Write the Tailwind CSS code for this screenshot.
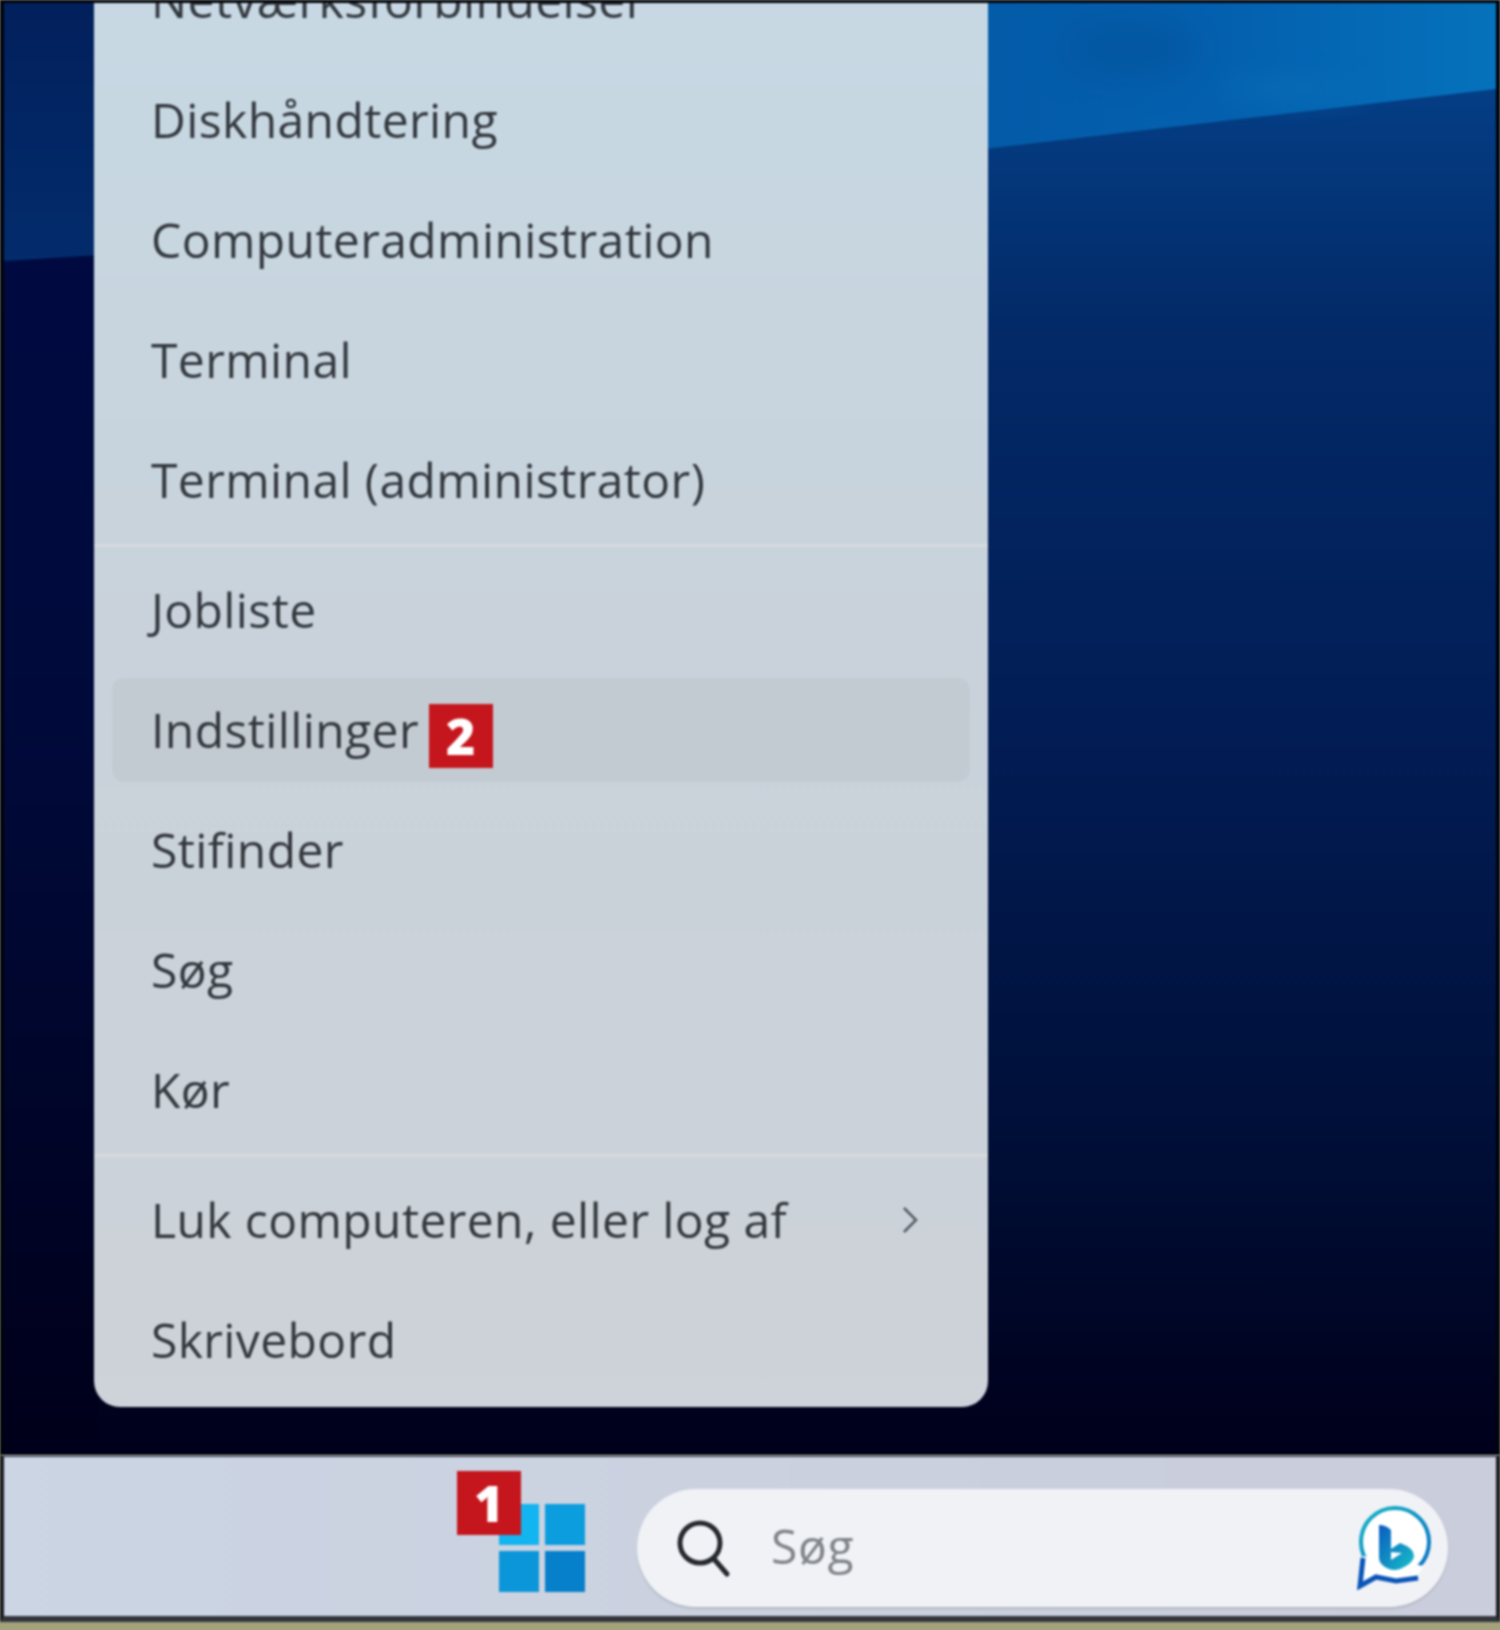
<!DOCTYPE html>
<html lang="da">
<head>
    <meta charset="UTF-8">
    <title>Indstillinger</title>
    <script src="https://cdn.jsdelivr.net/npm/@tailwindcss/browser@4"></script>
</head>
<body class="bg-[#a3a27c]">
    <div class="w-[1500px] h-[1630px] overflow-hidden flex flex-col pb-[8px] font-['Open_Sans','Noto_Sans',sans-serif]">
        <div class="relative flex-1 flex flex-col justify-end overflow-hidden border-x-[4px] border-t-[3px] border-[#00030f] bg-[#00001c] blur-[1.2px]">
            <!-- wallpaper -->
            <svg class="absolute inset-0 w-full h-full" viewBox="0 0 1492 1452" preserveAspectRatio="none">
                <defs>
                    <linearGradient id="wallBase" x1="0" y1="0" x2="0" y2="1">
                        <stop offset="0" stop-color="#05468f"/>
                        <stop offset="0.1" stop-color="#04397e"/>
                        <stop offset="0.22" stop-color="#032a68"/>
                        <stop offset="0.5" stop-color="#021d55"/>
                        <stop offset="0.78" stop-color="#000f38"/>
                        <stop offset="1" stop-color="#00001a"/>
                    </linearGradient>
                    <linearGradient id="wallLeft" x1="0" y1="0" x2="0" y2="1">
                        <stop offset="0" stop-color="#000b45"/>
                        <stop offset="0.5" stop-color="#000a3a"/>
                        <stop offset="1" stop-color="#00001a"/>
                    </linearGradient>
                    <linearGradient id="wallTop" x1="0" y1="0" x2="1" y2="0">
                        <stop offset="0" stop-color="#045ba8"/>
                        <stop offset="0.5" stop-color="#0461b0"/>
                        <stop offset="1" stop-color="#0672bc"/>
                    </linearGradient>
                    <linearGradient id="wallStrip" x1="0" y1="0" x2="0" y2="1">
                        <stop offset="0" stop-color="#02205c"/>
                        <stop offset="1" stop-color="#032c6c"/>
                    </linearGradient>
                </defs>
                <rect width="1492" height="1452" fill="url(#wallBase)"/>
                <rect width="95" height="1452" fill="url(#wallLeft)"/>
                <polygon points="0,0 95,0 95,252 0,258" fill="url(#wallStrip)"/>
                <polygon points="980,0 1492,0 1492,86 980,146" fill="url(#wallTop)"/>
                <ellipse class="blur-[18px]" cx="1125" cy="45" rx="70" ry="30" fill="#04559f" opacity="0.8"/>
                <ellipse class="blur-[12px]" cx="1290" cy="85" rx="70" ry="12" fill="#0a6cb4" opacity="0.7"/>
            </svg>

            <!-- context menu -->
            <div class="relative ml-[90px] mb-[48px] w-[894px] flex flex-col rounded-b-[26px] pb-[7px] bg-linear-to-b from-[#c7d9e5] via-[#c9d2da] to-[#ced2d9] text-[48px] tracking-[0.4px] leading-[120px] text-[#33383e]">
                <div class="h-[120px] flex items-center px-[57px] shrink-0">Netværksforbindelser</div>
                <div class="h-[120px] flex items-center px-[57px] shrink-0">Diskhåndtering</div>
                <div class="h-[120px] flex items-center px-[57px] shrink-0">Computeradministration</div>
                <div class="h-[120px] flex items-center px-[57px] shrink-0">Terminal</div>
                <div class="h-[120px] flex items-center px-[57px] shrink-0">Terminal (administrator)</div>
                <div class="h-[10px] flex items-center shrink-0"><div class="w-full h-[3px] bg-[#d6dce1]"></div></div>
                <div class="h-[120px] flex items-center px-[57px] shrink-0">Jobliste</div>
                <div class="h-[120px] py-[8px] px-[18px] shrink-0">
                    <div class="h-[104px] flex items-center px-[39px] rounded-[12px] bg-[#bfc6cd]/60 leading-none">
                        <span>Indstillinger</span>
                        <span class="ml-[10px] mt-[12px] w-[64px] h-[64px] flex items-center justify-center bg-[#c5161d] text-white text-[50px] font-extrabold">2</span>
                    </div>
                </div>
                <div class="h-[120px] flex items-center px-[57px] shrink-0">Stifinder</div>
                <div class="h-[120px] flex items-center px-[57px] shrink-0">Søg</div>
                <div class="h-[120px] flex items-center px-[57px] shrink-0">Kør</div>
                <div class="h-[10px] flex items-center shrink-0"><div class="w-full h-[3px] bg-[#d6dade]"></div></div>
                <div class="h-[120px] flex items-center justify-between pl-[57px] pr-[68px] shrink-0">
                    <span>Luk computeren, eller log af</span>
                    <svg class="w-[20px] h-[30px]" viewBox="0 0 20 30" fill="none" stroke="#555b62" stroke-width="2.5"><path d="M4 3 L16 15 L4 27"/></svg>
                </div>
                <div class="h-[120px] flex items-center px-[57px] shrink-0">Skrivebord</div>
            </div>
        </div>

        <!-- taskbar -->
        <div class="relative h-[167px] shrink-0 flex items-center pt-[22px] pl-[495px] pr-[48px] border-x-[4px] border-t-[2px] border-b-[6px] border-x-[#1a1a22] border-t-[#4d5160] border-b-[#33353d] bg-linear-to-r from-[#cbd5e4] via-[#cbd1df] to-[#cacddb] blur-[1.2px]">
            <div class="relative shrink-0">
                <svg class="w-[86px] h-[88px]" viewBox="0 0 86 88">
                    <rect x="0" y="0" width="40" height="41" fill="#12b5ef"/>
                    <rect x="46" y="0" width="40" height="41" fill="#0c9ddf"/>
                    <rect x="0" y="47" width="40" height="41" fill="#0b96d9"/>
                    <rect x="46" y="47" width="40" height="41" fill="#0680cb"/>
                </svg>
                <span class="absolute left-[-42px] top-[-33px] w-[64px] h-[64px] flex items-center justify-center bg-[#c5161d] text-white text-[50px] leading-none font-extrabold">1</span>
            </div>

            <div class="ml-[52px] flex-1 h-[118px] flex items-center rounded-full bg-[#f0f2f6] shadow-[0_2px_2px_#b3b7c2] pl-[38px] pr-[14px]">
                <svg class="w-[56px] h-[60px] shrink-0" viewBox="0 0 56 60" fill="none" stroke="#262a2e" stroke-width="5">
                    <circle cx="25" cy="25" r="20"/>
                    <path d="M39 41 L52 56" stroke-linecap="round"/>
                </svg>
                <span class="ml-[40px] -mt-[3px] text-[48px] tracking-[0.6px] leading-none text-[#808589]">Søg</span>
                <svg class="ml-auto w-[78px] h-[84px] shrink-0" viewBox="0 0 78 84" fill="none">
                    <defs>
                        <linearGradient id="bingRing" x1="0" y1="0" x2="1" y2="1">
                            <stop offset="0" stop-color="#14b4c4"/>
                            <stop offset="1" stop-color="#0a6cc4"/>
                        </linearGradient>
                        <linearGradient id="bingLetter" x1="0" y1="0" x2="1" y2="1">
                            <stop offset="0" stop-color="#0a5cc0"/>
                            <stop offset="1" stop-color="#18c0c8"/>
                        </linearGradient>
                    </defs>
                    <circle cx="39" cy="36" r="34" fill="#ffffff" stroke="url(#bingRing)" stroke-width="4"/>
                    <path d="M7 50 L4 80 L22 72 L58 74 L68 60" fill="#ffffff"/>
                    <path d="M7 52 L4 80 L20 71 L40 75 L62 72" stroke="#0a55b8" stroke-width="5"/>
                    <path d="M23 19 Q30 19 35 24 L35 43 L44 37 Q58 42 58 50 Q58 57 44 63 Q38 65 33 63 Q23 59 23 52 Z" fill="url(#bingLetter)"/>
                    <path d="M35 46 L46 47 L35 54 Z" fill="#ffffff"/>
                </svg>
            </div>
        </div>
    </div>
</body>
</html>
